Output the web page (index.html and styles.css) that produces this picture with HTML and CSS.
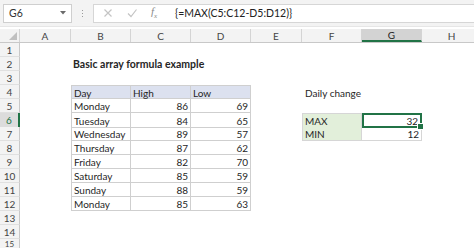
FILE: index.html
```html
<!DOCTYPE html>
<html lang="en">
  <head>
    <meta charset="UTF-8" />
    <title>Basic array formula example</title>
    <link rel="stylesheet" href="styles.css">
  </head>
  <body>
    <div class="toolbar">
      <div class="namebox">
        <span>G6</span>
        <svg class="namebox__arrow" viewBox="0 0 6 4" width="6" height="4">
          <path d="M0 0 L6 0 L3 3.5 Z" fill="#6b6b6b" />
        </svg>
      </div>
      <div class="grip"><i></i><i></i><i></i></div>
      <div class="formula">
        <div class="formula__icons">
          <svg viewBox="0 0 10 10" width="10" height="10">
            <path d="M1.5 1.5 L8.5 8.5 M8.5 1.5 L1.5 8.5" stroke="#c4c4c4" stroke-width="1.2" fill="none" />
          </svg>
          <svg viewBox="0 0 10 10" width="10" height="10">
            <path d="M1 5.5 L4 8.5 L9.5 1.5" stroke="#c4c4c4" stroke-width="1.2" fill="none" />
          </svg>
          <span class="fx">f<sub>x</sub></span>
        </div>
        <div class="formula__text">{=MAX(C5:C12-D5:D12)}</div>
      </div>
    </div>

    <div class="sheet">
      <div class="row row--head">
        <div class="corner"></div>
        <div class="col-head">A</div>
        <div class="col-head">B</div>
        <div class="col-head">C</div>
        <div class="col-head">D</div>
        <div class="col-head">E</div>
        <div class="col-head">F</div>
        <div class="col-head col-head--active">G</div>
        <div class="col-head">H</div>
      </div>

      <div class="row">
        <div class="row-head">1</div>
      </div>
      <div class="row">
        <div class="row-head">2</div>
        <div class="cell"></div>
        <div class="cell title">Basic array formula example</div>
      </div>
      <div class="row">
        <div class="row-head">3</div>
      </div>
      <div class="row">
        <div class="row-head">4</div>
        <div class="cell"></div>
        <div class="cell t t--first t--top t--head">Day</div>
        <div class="cell t t--top t--head">High</div>
        <div class="cell t t--top t--head">Low</div>
        <div class="cell"></div>
        <div class="cell note">Daily change</div>
      </div>
      <div class="row">
        <div class="row-head">5</div>
        <div class="cell"></div>
        <div class="cell t t--first">Monday</div>
        <div class="cell t num">86</div>
        <div class="cell t num">69</div>
      </div>
      <div class="row">
        <div class="row-head row-head--active">6</div>
        <div class="cell"></div>
        <div class="cell t t--first">Tuesday</div>
        <div class="cell t num">84</div>
        <div class="cell t num">65</div>
        <div class="cell"></div>
        <div class="cell s s--label s--top">MAX</div>
        <div class="cell s s--top num selected">32</div>
      </div>
      <div class="row">
        <div class="row-head">7</div>
        <div class="cell"></div>
        <div class="cell t t--first">Wednesday</div>
        <div class="cell t num">89</div>
        <div class="cell t num">57</div>
        <div class="cell"></div>
        <div class="cell s s--label">MIN</div>
        <div class="cell s num">12</div>
      </div>
      <div class="row">
        <div class="row-head">8</div>
        <div class="cell"></div>
        <div class="cell t t--first">Thursday</div>
        <div class="cell t num">87</div>
        <div class="cell t num">62</div>
      </div>
      <div class="row">
        <div class="row-head">9</div>
        <div class="cell"></div>
        <div class="cell t t--first">Friday</div>
        <div class="cell t num">82</div>
        <div class="cell t num">70</div>
      </div>
      <div class="row">
        <div class="row-head">10</div>
        <div class="cell"></div>
        <div class="cell t t--first">Saturday</div>
        <div class="cell t num">85</div>
        <div class="cell t num">59</div>
      </div>
      <div class="row">
        <div class="row-head">11</div>
        <div class="cell"></div>
        <div class="cell t t--first">Sunday</div>
        <div class="cell t num">88</div>
        <div class="cell t num">59</div>
      </div>
      <div class="row">
        <div class="row-head">12</div>
        <div class="cell"></div>
        <div class="cell t t--first">Monday</div>
        <div class="cell t num">85</div>
        <div class="cell t num">63</div>
      </div>
      <div class="row">
        <div class="row-head">13</div>
      </div>
      <div class="row">
        <div class="row-head">14</div>
      </div>
      <div class="row row--last">
        <div class="row-head">15</div>
      </div>
    </div>
  </body>
</html>
```

FILE: styles.css
```css
* {
  box-sizing: border-box;
  margin: 0;
  padding: 0;
}
:root {
  --green: #217346;
  --line: #d4d4d4;
  --head-bg: #f3f3f3;
  --cols: 20px 51px 60px 60px 60px 51px 60px 60px 60px;
}
body {
  background: #fff;
  color: #262626;
  font: 10px/1 Lato, "Liberation Sans", sans-serif;
  width: 474px;
  height: 248px;
  overflow: hidden;
}

/* Formula bar */
.toolbar {
  background: #f3f3f3;
  display: flex;
  align-items: center;
  height: 27px;
  padding: 4px 0 4px 3px;
  border-bottom: 1px solid #e6e6e6;
}
.namebox {
  background: #fff;
  border: 1px solid #cfcfcf;
  width: 69px;
  height: 19px;
  display: flex;
  align-items: center;
  justify-content: space-between;
  padding: 0 5px 0 5px;
  color: #333;
  font-size: 10.5px;
}
.grip {
  width: 21px;
  display: flex;
  flex-direction: column;
  align-items: center;
  gap: 2px;
}
.grip i {
  width: 1px;
  height: 1px;
  background: #9a9a9a;
}
.formula {
  flex: 1;
  background: #fff;
  border: 1px solid #d6d6d6;
  border-right: 0;
  height: 19px;
  display: flex;
  align-items: center;
}
.formula__icons {
  width: 81px;
  display: flex;
  align-items: center;
  gap: 14px;
  padding-left: 9px;
}
.fx {
  font: italic 11px "Liberation Serif", serif;
  color: #8a8a8a;
}
.fx sub {
  font-size: 7px;
}
.formula__text {
  color: #222;
  font-size: 10.5px;
}

/* Grid */
.sheet {
  margin-top: 2px;
}
.row {
  display: grid;
  grid-template-columns: var(--cols);
  height: 14px;
}
.row--last {
  height: 8px;
}
.row--head {
  background: var(--head-bg);
  border-bottom: 1px solid #c8c8c8;
}
.corner {
  position: relative;
  border-right: 1px solid var(--line);
}
.corner::after {
  content: "";
  position: absolute;
  right: 2px;
  bottom: 2px;
  border-left: 8px solid transparent;
  border-bottom: 8px solid #c0c0c0;
}
.col-head {
  border-right: 1px solid var(--line);
  color: #444;
  display: flex;
  align-items: center;
  justify-content: center;
}
.col-head--active {
  background: #d3d3d3;
  border-bottom: 2px solid var(--green);
  color: #222;
}
.row-head {
  background: var(--head-bg);
  border-right: 1px solid #c8c8c8;
  border-bottom: 1px solid #e0e0e0;
  color: #444;
  display: flex;
  align-items: center;
  justify-content: center;
}
.row--last .row-head {
  align-items: flex-start;
  padding-top: 1px;
  font-size: 8px;
}
.row-head--active {
  background: #dcdcdc;
  border-right: 2px solid var(--green);
  color: var(--green);
}
.cell {
  display: flex;
  align-items: center;
  padding: 1px 2px 0;
  white-space: nowrap;
}
.title {
  font-weight: bold;
  font-size: 10.5px;
}
.note {
  padding-left: 3px;
}
.num {
  justify-content: flex-end;
}

/* Data table B4:D12 */
.t {
  border-right: 1px solid #cfcfcf;
  border-bottom: 1px solid #cfcfcf;
}
.t--first {
  border-left: 1px solid #cfcfcf;
}
.t--top {
  border-top: 1px solid #cfcfcf;
}
.t--head {
  background: #dce1ef;
}

/* Summary F6:G7 */
.s {
  border-right: 1px solid #d6d6d6;
  border-bottom: 1px solid #d6d6d6;
}
.s--top {
  border-top: 1px solid #d6d6d6;
}
.s--label {
  background: #e2efda;
  border-left: 1px solid #d6d6d6;
}
.selected {
  position: relative;
  border: 2px solid var(--green);
}
.selected::after {
  content: "";
  position: absolute;
  right: -4px;
  bottom: -4px;
  width: 5px;
  height: 5px;
  background: var(--green);
  border: 1px solid #fff;
}
```
